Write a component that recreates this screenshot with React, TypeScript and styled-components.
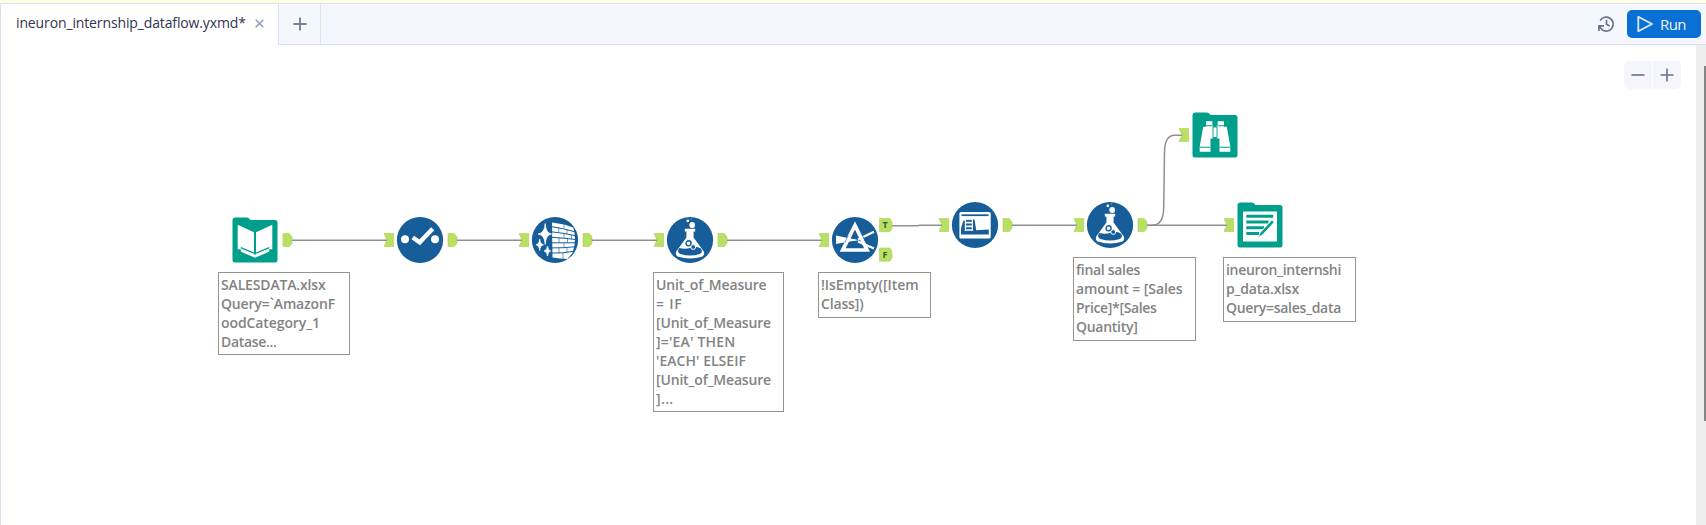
import React, { useLayoutEffect, useRef } from "react";
import styled, { createGlobalStyle } from "styled-components";

const BLUE = "#175d99";
const TEAL = "#009f8c";
const LIME = "#b9df63";

const GlobalStyle = createGlobalStyle`
  * { box-sizing: border-box; }
  body { margin: 0; background: #fff; overflow: hidden; font-family: "Open Sans", "Noto Sans", sans-serif; }
`;

const Window = styled.div`
  width: 1706px;
  height: 525px;
  display: flex;
  flex-direction: column;
  overflow: hidden;
`;
const Strip = styled.div`
  height: 3px;
  flex: none;
  background: #ffffe1;
`;
const TabBar = styled.div`
  height: 42px;
  flex: none;
  display: flex;
  background: #f4f7fd;
  border-top: 1px solid #d9e2f0;
  border-left: 1px solid #d9e2f0;
  box-shadow: inset 0 -1px 0 #d9e2f0;
`;
const Tab = styled.div`
  width: 278px;
  display: flex;
  align-items: center;
  padding: 0 0 3px 15px;
  gap: 9px;
  background: #fff;
  border-right: 1px solid #d9e2f0;
  color: #31344f;
  font: 500 14px/20px "Open Sans", "Noto Sans", sans-serif;
`;
const NewTab = styled.div`
  width: 42px;
  display: flex;
  align-items: center;
  justify-content: center;
  padding-bottom: 2px;
  border-right: 1px solid #d9e2f0;
`;
const Actions = styled.div`
  margin-left: auto;
  display: flex;
  align-items: center;
  gap: 12px;
  padding: 0 5px 1px 0;
`;
const RunButton = styled.button`
  width: 74px;
  height: 28px;
  display: flex;
  align-items: center;
  gap: 6px;
  padding: 0 0 0 9px;
  border: 0;
  border-radius: 5px;
  background: #0b70d3;
  color: #eef5ff;
  font: 500 15px/20px "Open Sans", "Noto Sans", sans-serif;
`;
const Body = styled.div`
  flex: 1;
  display: flex;
  border-left: 1px solid #d9e2f0;
`;
const Canvas = styled.div`
  position: relative;
  flex: 1;
  background: #fff;
`;
const ScrollTrack = styled.div`
  width: 10px;
  padding-top: 21px;
  display: flex;
  justify-content: flex-end;
  align-items: flex-start;
  background: #eeeeee;
`;
const ScrollThumb = styled.div`
  width: 2px;
  height: 355px;
  background: #858585;
`;
const ZoomControls = styled.div`
  position: absolute;
  top: 15.5px;
  right: 15.5px;
  display: flex;
  gap: 1px;
`;
const ZoomButton = styled.div<{ $side: "left" | "right" }>`
  width: 28px;
  height: 28px;
  display: flex;
  align-items: center;
  justify-content: center;
  background: #f4f6fb;
  border-radius: ${(p) => (p.$side === "left" ? "5px 0 0 5px" : "0 5px 5px 0")};
`;
/* Canvas children use window coordinates; the layer shifts them back to the canvas origin. */
const Layer = styled.div`
  position: absolute;
  left: -1px;
  top: -45px;
`;
const Wires = styled.svg`
  position: absolute;
  left: 0;
  top: 0;
`;
const Node = styled.div<{ $x: number; $y: number }>`
  position: absolute;
  left: ${(p) => p.$x}px;
  top: ${(p) => p.$y}px;
  width: 48px;
  height: 48px;
  margin: -24px 0 0 -24px;
  svg { display: block; }
`;
const NoteBox = styled.div<{ $x: number; $y: number; $w: number; $h: number }>`
  position: absolute;
  left: ${(p) => p.$x}px;
  top: ${(p) => p.$y}px;
  width: ${(p) => p.$w}px;
  height: ${(p) => p.$h}px;
  padding: 2px 0 0 2px;
  border: 1px solid #949494;
  background: #fff;
  color: #838383;
  font: 600 14px/19px "Open Sans", "Noto Sans", sans-serif;
`;
const Line = styled.div`
  white-space: pre;
`;

/* Tracks a line of text so that it fills the given width. */
function Fit({ text, width }: { text: string; width: number }) {
  const ref = useRef<HTMLSpanElement>(null);
  useLayoutEffect(() => {
    const el = ref.current;
    if (!el) return;
    el.style.letterSpacing = "0px";
    const natural = el.getBoundingClientRect().width;
    el.style.letterSpacing = `${(width - natural) / text.length}px`;
  }, [text, width]);
  return <span ref={ref}>{text}</span>;
}

type NoteData = { x: number; y: number; w: number; h: number; lines: [string, number][] };

const notes: NoteData[] = [
  { x: 218, y: 272, w: 132, h: 83, lines: [["SALESDATA.xlsx", 104.5], ["Query=`AmazonF", 114], ["oodCategory_1", 99], ["Datase...", 55.5]] },
  { x: 653, y: 272, w: 131, h: 140, lines: [["Unit_of_Measure", 110.5], ["= IF", 26.5], ["[Unit_of_Measure", 115], ["]='EA' THEN", 79.5], ["'EACH' ELSEIF", 90], ["[Unit_of_Measure", 115], ["]...", 17.5]] },
  { x: 818, y: 272, w: 113, h: 46, lines: [["!IsEmpty([Item", 97.5], ["Class])", 42.5]] },
  { x: 1073, y: 257, w: 123, h: 84, lines: [["final sales", 64], ["amount = [Sales", 106.5], ["Price]*[Sales", 80.5], ["Quantity]", 61.5]] },
  { x: 1223, y: 257, w: 133, h: 65, lines: [["ineuron_internshi", 115], ["p_data.xlsx", 73], ["Query=sales_data", 115] ] },
];

function Note({ x, y, w, h, lines }: NoteData) {
  return (
    <NoteBox $x={x} $y={y} $w={w} $h={h}>
      {lines.map(([t, width], i) => (
        <Line key={i}><Fit text={t} width={width} /></Line>
      ))}
    </NoteBox>
  );
}

const Disc = ({ children }: { children: React.ReactNode }) => (
  <svg width="48" height="48" viewBox="-24 -24 48 48">
    <circle r="23.1" fill={BLUE} />
    {children}
  </svg>
);

const Folder = ({ children }: { children: React.ReactNode }) => (
  <svg width="48" height="48" viewBox="-24 -24 48 48">
    <path d="M-22.5 -19.5q0-3 3-3H-8q2 0 3.5 2.5H20q2.5 0 2.5 2.5V20q0 2.5-2.5 2.5H-20q-2.5 0-2.5-2.5Z" fill={TEAL} />
    {children}
  </svg>
);

const InputIcon = () => (
  <Folder>
    <path d="M-17.3 -15.3L-1 -7.8V14.8L-14 9.2H-17.3ZM17.3 -15.3L1 -7.8V14.8L14 9.2H17.3Z" fill="#fff" />
    <path d="M-14.3 7.6L0 13.6L14.3 7.6" fill="none" stroke={TEAL} strokeWidth="1.4" />
    <path d="M-14.3 9.4L0 15.2L14.3 9.4L14 12.3L0 18.3L-14 12.3Z" fill="#fff" transform="translate(0 -.5)" />
  </Folder>
);

const SelectIcon = () => (
  <Disc>
    <circle cx="-15" cy="-.7" r="4" fill="#fff" />
    <circle cx="15" cy="-.7" r="4" fill="#fff" />
    <path d="M-7.2 -2.5L-.3 2.3L12.7 -11.3" fill="none" stroke="#fff" strokeWidth="4.4" />
  </Disc>
);

const CleanseIcon = () => (
  <Disc>
    <path d="M-3 -17.5Q10 -16 18.3 -12.5Q22 0 17.5 13L12.5 19Q5 18.5 -2.5 17.5Z" fill="#fff" />
    <g fill="none" stroke={BLUE}>
      <path strokeWidth="1" d="M-3 -13.3Q9 -11.5 20 -8.2M-3 -8.1Q9 -7 21 -4.2M-3 -2.7Q9 -2 22 -.3M-3 2.8H22M-3 7.9Q9 8 20 6.8M-3 13Q8 13.5 19 11.2" />
      <path strokeWidth=".6" d="M9 -16V-12M3.8 -13V-8M12 -11V-6M9 -7V-1.5M16.5 -5V-1M4 -2.5V2.8M12.5 -1.5V2.8M9 2.8V8M4 8V13M12 8V13M8 13V19" />
    </g>
    <path d="M-9.8 -16.5Q-9.2 -6.7 -3.5 -6Q-9.2 -5.3 -9.8 4.5Q-10.4 -5.3 -17 -6Q-10.4 -6.7 -9.8 -16.5Z" fill="#fff" stroke="#fff" strokeWidth=".7" />
    <path d="M-15.3 -1Q-14.8 4 -11.5 4.8Q-14.8 5.6 -15.3 10.5Q-15.8 5.6 -19 4.8Q-15.8 4 -15.3 -1ZM-7.5 6Q-7 10.3 -4.2 11Q-7 11.7 -7.5 16Q-8 11.7 -11 11Q-8 10.3 -7.5 6Z" fill="#fff" stroke="#fff" strokeWidth=".7" />
  </Disc>
);

const FlaskIcon = () => (
  <Disc>
    <path d="M-5.2 -11.3H5.2V-8.6H3.6V-2.5L13.8 11.5Q15 14.5 12.5 16.5Q0 20.5 -12.5 16.5Q-15 14.5 -13.8 11.5L-3.6 -2.5V-8.6H-5.2Z" fill="#fff" />
    <path d="M-10.8 8Q-5 9.5 0 8Q6 6 10.6 8.2L12 10.5Q12 13 9.5 14Q0 17 -9.5 14Q-12 13 -12 10.5Z" fill={BLUE} />
    <circle cx="-1.4" cy="3.3" r="2.5" fill="#fff" stroke={BLUE} strokeWidth="1.4" />
    <circle cx="3.2" cy="7" r="2.4" fill={BLUE} stroke="#fff" strokeWidth="1" />
    <circle cx="2.2" cy="-15" r="2.9" fill="#fff" />
    <circle cx="-2.2" cy="-19.2" r="1.4" fill="#fff" />
    <circle cx="1.4" cy="-21" r=".6" fill="#a9c6de" />
  </Disc>
);

const FilterIcon = () => (
  <Disc>
    <path d="M-19 -4.5L2 0L-19 4Z" fill="#fff" />
    <path d="M3 -.5L19 -8.2M3 1.5L19 8.5" stroke="#fff" strokeWidth="2.2" />
    <path d="M0 -14.5L12 10H-12.3Z" fill="none" stroke="#fff" strokeWidth="3.7" />
    <path d="M-5.8 -1.7L4 .2L-5.8 1.5Z" fill="#fff" />
    <path d="M-7 -4.6L-10.5 2.8M7.3 -4.4L10.8 3" stroke={BLUE} strokeWidth=".6" transform="translate(.3 0)" />
  </Disc>
);

const WindowIcon = () => (
  <Disc>
    <rect x="-15.6" y="-13" width="31.3" height="26.6" rx="1.5" fill="#fff" />
    <path d="M-13.5 -9.8H13.5" stroke={BLUE} strokeWidth="1.8" />
    <path d="M-14 9.5V3.5L-11.6 -4.5H-9.3V-5.5H-.5L1.2 5.3L13.8 4.5V9.5Z" fill={BLUE} />
    <path d="M-9.6 -6.5V6M-2.6 -6.5V6" stroke="#fff" strokeWidth="1.2" />
    <path d="M-9.5 -6H-2.5M-9.5 -2.3H-2.5M-9.5 1.4H-2.5M-9.5 5H-2.5" stroke="#fff" strokeWidth="1.7" />
  </Disc>
);

const BrowseIcon = () => (
  <Folder>
    <path d="M-9 -13.8H-2.7V-10H-1.8V3.5H-4.5V16.8H-15.3V11.5L-11.8 -8.3H-9ZM9 -13.8H2.7V-10H1.8V3.5H4.5V16.8H15.3V11.5L11.8 -8.3H9Z" fill="#fff" />
    <path d="M-9.5 -9.2H-2.2M9.5 -9.2H2.2M-15.3 12.2H-4.5M15.3 12.2H4.5" stroke={TEAL} strokeWidth="1.1" />
    <rect x="-2" y="-8" width="4" height="10.5" fill="#fff" stroke={TEAL} strokeWidth=".9" />
  </Folder>
);

const OutputIcon = () => (
  <Folder>
    <rect x="-17" y="-13.5" width="34" height="30" fill="#fff" />
    <path d="M-13.7 -8.7H13.2M-13.7 -3H8.5M-13.7 2.8H4M-13.7 8.5H-1" stroke={TEAL} strokeWidth="3.1" />
    <path d="M-2.5 13L.3 7.4L11.6 -4.7Q13.8 -5 14 -2.5L3 9.5Z" fill={TEAL} stroke="#fff" strokeWidth="1" />
  </Folder>
);

const inputs: [number, number][] = [[384, 240], [519, 240], [654, 240], [819, 240], [939, 225], [1074, 225], [1179, 135], [1224, 225]];
const outputs: [number, number][] = [[283, 240], [448, 240], [583, 240], [718, 240], [1003, 225], [1138, 225]];
const wires = [
  "M292 240.2H387", "M457 240.2H522", "M592 240.2H657", "M727 240.2H822",
  "M892 225.7H917L920 225.2H942", "M1012 225.2H1077", "M1147 225.2H1227",
  "M1147 225.2H1152Q1163.5 225.2 1163.7 208L1164.5 152Q1164.5 135.2 1175 135.2H1182",
];

const Diagram = () => (
  <Wires width="1706" height="525" viewBox="0 0 1706 525">
    {inputs.map(([x, y]) => (
      <path key={x} d={`M${x} ${y - 6.5}H${x + 9.7}V${y + 6.5}H${x}L${x + 3} ${y}Z`} fill={LIME} stroke="#a9cf58" strokeWidth=".6" />
    ))}
    {outputs.map(([x, y]) => (
      <path key={x} d={`M${x} ${y - 6.5}H${x + 6.3}L${x + 9} ${y - 3}V${y + 3.2}L${x + 6.3} ${y + 6.5}H${x}Z`} fill={LIME} stroke="#a9cf58" strokeWidth=".6" />
    ))}
    {[["T", 218.5], ["F", 248]].map(([label, top]) => (
      <g key={label}>
        <path d={`M879.5 ${top}h10.3l2.2 3.5v6.2l-2.2 3.5h-10.3z`} fill={LIME} stroke="#a9cf58" strokeWidth=".6" />
        <text x="885" y={Number(top) + 9.9} textAnchor="middle" fontFamily="Open Sans, sans-serif" fontSize="9" fontWeight="700" fill="#33583f">{label}</text>
      </g>
    ))}
    {wires.map((d) => <path key={d} d={d} fill="none" stroke="#8f8f8f" strokeWidth="1.5" />)}
  </Wires>
);

const stroke = "#66728f";

export default function App() {
  return (
    <Window>
      <GlobalStyle />
      <Strip />
      <TabBar>
        <Tab>
          <Fit text="ineuron_internship_dataflow.yxmd*" width={229.8} />
          <svg width="9" height="9" viewBox="0 0 9 9"><path d="M.7 .7L8.3 8.3M8.3 .7L.7 8.3" stroke="#919cba" strokeWidth="1.5" /></svg>
        </Tab>
        <NewTab>
          <svg width="14" height="14" viewBox="0 0 14 14"><path d="M7 .5V13.5M.5 7H13.5" stroke="#747f9c" strokeWidth="1.9" /></svg>
        </NewTab>
        <Actions>
          <svg width="18" height="18" viewBox="0 0 18 18" fill="none" stroke={stroke} strokeWidth="1.6">
            <path d="M3.2 5.5A7 7 0 1 1 5.2 14.9" />
            <path d="M1.9 16V10.9H7M2.1 11Q3.6 13.5 6 15.3" />
            <path d="M9.5 4.7V9.2L12.6 11" />
          </svg>
          <RunButton>
            <svg width="18" height="18" viewBox="0 0 18 18"><path d="M2.3 1.7V16.3L16 9Z" fill="none" stroke="#dbeaff" strokeWidth="1.8" strokeLinejoin="round" /></svg>
            <Fit text="Run" width={26} />
          </RunButton>
        </Actions>
      </TabBar>
      <Body>
        <Canvas>
          <Layer>
            <Diagram />
            <Node $x={255.3} $y={239.8}><InputIcon /></Node>
            <Node $x={420.3} $y={239.8}><SelectIcon /></Node>
            <Node $x={555.3} $y={239.8}><CleanseIcon /></Node>
            <Node $x={690.3} $y={239.8}><FlaskIcon /></Node>
            <Node $x={855.3} $y={239.8}><FilterIcon /></Node>
            <Node $x={975.3} $y={224.8}><WindowIcon /></Node>
            <Node $x={1110.3} $y={224.8}><FlaskIcon /></Node>
            <Node $x={1215.3} $y={134.6}><BrowseIcon /></Node>
            <Node $x={1260.3} $y={224.6}><OutputIcon /></Node>
            {notes.map((n) => <Note key={n.x} {...n} />)}
          </Layer>
          <ZoomControls>
            <ZoomButton $side="left">
              <svg width="14" height="14" viewBox="0 0 14 14"><path d="M.5 7H13.5" stroke={stroke} strokeWidth="1.6" /></svg>
            </ZoomButton>
            <ZoomButton $side="right">
              <svg width="14" height="14" viewBox="0 0 14 14"><path d="M7 .5V13.5M.5 7H13.5" stroke={stroke} strokeWidth="1.6" /></svg>
            </ZoomButton>
          </ZoomControls>
        </Canvas>
        <ScrollTrack><ScrollThumb /></ScrollTrack>
      </Body>
    </Window>
  );
}
